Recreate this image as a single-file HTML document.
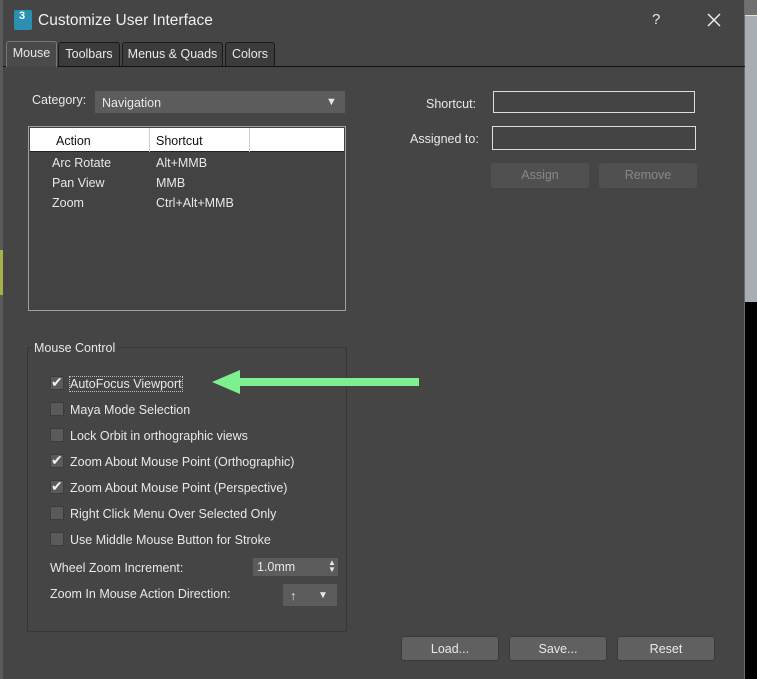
<!DOCTYPE html>
<html><head><style>
*{box-sizing:border-box;margin:0;padding:0}
body{width:757px;height:679px;background:#000;position:relative;overflow:hidden;font-family:"Liberation Sans",sans-serif;font-size:12.5px;color:#e8e8e8}
.a{position:absolute}
.dlg{left:3px;top:0;width:742px;height:679px;background:#454545;border-right:1px solid #6a6a6a}
.t{position:absolute;white-space:nowrap}
.tab{position:absolute;top:42px;height:24px;background:#3b3b3b;border:1px solid #1a1a1a;border-bottom:none;border-radius:3px 3px 0 0;padding-top:4px;text-align:center;font-size:12.5px}
.cb{position:absolute;left:50px;width:14px;height:14px;background:#5a5a5a;border:1px solid #3d3d3d}
.cb.k::after{content:"\2714";position:absolute;left:0px;top:-3px;font-size:14px;color:#f0f0f0}
.lbl{position:absolute;left:70px;font-size:12.5px}
.btn{position:absolute;height:25px;border-radius:3px;text-align:center;padding-top:5px;font-size:12.5px}
</style></head><body>
<div class="a" style="left:0;top:0;width:3px;height:679px;background:#5a5a5a"></div>
<div class="a" style="left:0;top:250px;width:3px;height:45px;background:#a8b04a"></div>
<div class="a" style="left:745px;top:0;width:12px;height:15px;background:#707070"></div>
<div class="a" style="left:745px;top:15px;width:12px;height:287px;background:#a9aeb4;border-top:1px solid #e8e4c0"></div>
<div class="a dlg"></div>
<!-- title -->
<div class="a" style="left:14px;top:10px;width:18px;height:20px;background:#2a8fb0;border-radius:2px"></div>
<div class="t" style="left:19px;top:10px;font-size:11px;font-weight:bold;color:#fff">3</div>
<div class="t" style="left:38px;top:12px;font-size:15.5px;color:#f0f0f0">Customize User Interface</div>
<div class="t" style="left:652px;top:11px;font-size:15px">?</div>
<svg class="a" style="left:707px;top:13px" width="14" height="14"><path d="M1 1L13 13M13 1L1 13" stroke="#eee" stroke-width="1.5"/></svg>
<!-- tabs -->
<div class="a" style="left:3px;top:66px;width:742px;height:1px;background:#111"></div>
<div class="tab" style="left:6px;width:51px;background:#4a4a4a;border-color:#777;height:26px;top:41px">Mouse</div>
<div class="tab" style="left:58px;width:62px">Toolbars</div>
<div class="tab" style="left:122px;width:101px">Menus &amp; Quads</div>
<div class="tab" style="left:225px;width:50px">Colors</div>
<!-- category -->
<div class="t" style="left:32px;top:93px">Category:</div>
<div class="a" style="left:95px;top:91px;width:250px;height:22px;background:#5c5c5c"></div>
<div class="t" style="left:102px;top:96px">Navigation</div>
<div class="t" style="left:326px;top:96px;font-size:11px">&#9660;</div>
<!-- list -->
<div class="a" style="left:28px;top:126px;width:318px;height:185px;border:1px solid #a0a0a0;background:#434343"></div>
<div class="a" style="left:30px;top:128px;width:314px;height:24px;background:#fff;border-bottom:1px solid #222"></div>
<div class="a" style="left:149px;top:128px;width:1px;height:24px;background:#ccc"></div>
<div class="a" style="left:249px;top:128px;width:1px;height:24px;background:#ccc"></div>
<div class="t" style="left:56px;top:134px;color:#111">Action</div>
<div class="t" style="left:156px;top:134px;color:#111">Shortcut</div>
<div class="t" style="left:52px;top:156px">Arc Rotate</div><div class="t" style="left:156px;top:156px">Alt+MMB</div>
<div class="t" style="left:52px;top:176px">Pan View</div><div class="t" style="left:156px;top:176px">MMB</div>
<div class="t" style="left:52px;top:196px">Zoom</div><div class="t" style="left:156px;top:196px">Ctrl+Alt+MMB</div>
<!-- right -->
<div class="t" style="left:426px;top:97px">Shortcut:</div>
<div class="a" style="left:493px;top:91px;width:202px;height:22px;border:1px solid #ddd;background:#444"></div>
<div class="t" style="left:410px;top:132px">Assigned to:</div>
<div class="a" style="left:492px;top:126px;width:204px;height:24px;border:1px solid #ddd;background:#444"></div>
<div class="btn" style="left:491px;top:163px;width:98px;background:#505050;color:#888">Assign</div>
<div class="btn" style="left:599px;top:163px;width:98px;background:#505050;color:#888">Remove</div>
<!-- group -->
<div class="a" style="left:27px;top:347px;width:320px;height:285px;border:1px solid #363636;border-radius:2px"></div>
<div class="t" style="left:32px;top:341px;background:#454545;padding:0 2px">Mouse Control</div>
<div class="cb k" style="top:376px"></div><div class="lbl" style="top:377px;outline:1px dotted #bbb">AutoFocus Viewport</div>
<div class="cb" style="top:402px"></div><div class="lbl" style="top:403px">Maya Mode Selection</div>
<div class="cb" style="top:428px"></div><div class="lbl" style="top:429px">Lock Orbit in orthographic views</div>
<div class="cb k" style="top:454px"></div><div class="lbl" style="top:455px">Zoom About Mouse Point (Orthographic)</div>
<div class="cb k" style="top:480px"></div><div class="lbl" style="top:481px">Zoom About Mouse Point (Perspective)</div>
<div class="cb" style="top:506px"></div><div class="lbl" style="top:507px">Right Click Menu Over Selected Only</div>
<div class="cb" style="top:532px"></div><div class="lbl" style="top:533px">Use Middle Mouse Button for Stroke</div>
<div class="t" style="left:50px;top:561px">Wheel Zoom Increment:</div>
<div class="a" style="left:253px;top:558px;width:85px;height:18px;background:#5c5c5c"></div>
<div class="t" style="left:257px;top:560px">1.0mm</div>
<div class="t" style="left:328px;top:559px;font-size:8px;line-height:7px">&#9650;<br>&#9660;</div>
<div class="t" style="left:50px;top:587px">Zoom In Mouse Action Direction:</div>
<div class="a" style="left:283px;top:584px;width:54px;height:22px;background:#5c5c5c"></div>
<div class="t" style="left:290px;top:589px">&#8593;</div>
<div class="t" style="left:318px;top:590px;font-size:10px">&#9660;</div>
<!-- arrow -->
<svg class="a" style="left:210px;top:368px" width="212" height="30"><path d="M2 14L30 2V10H209V18H30V26Z" fill="#7ef08e"/></svg>
<!-- bottom buttons -->
<div class="btn" style="left:401px;top:636px;width:98px;background:#606060;border:1px solid #3a3a3a">Load...</div>
<div class="btn" style="left:509px;top:636px;width:98px;background:#606060;border:1px solid #3a3a3a">Save...</div>
<div class="btn" style="left:617px;top:636px;width:98px;background:#606060;border:1px solid #3a3a3a">Reset</div>
</body></html>
